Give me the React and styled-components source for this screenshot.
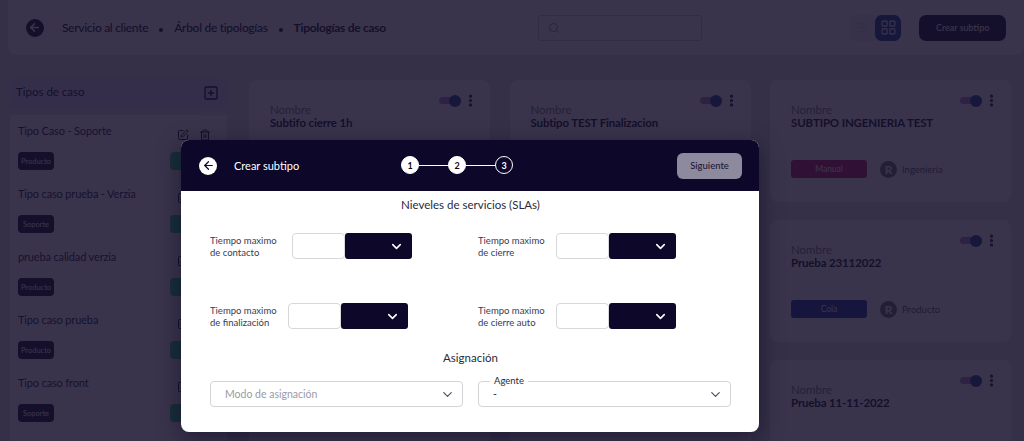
import React from "react";
import styled, { createGlobalStyle } from "styled-components";
import {
  ArrowLeft,
  ChevronDown,
  EllipsisVertical,
  LayoutGrid,
  Menu,
  Search,
  SquarePen,
  SquarePlus,
  Trash2,
} from "lucide-react";

const Global = createGlobalStyle`
  html, body { margin: 0; height: 441px; overflow: hidden; }
  body { font-family: "Lato", "Open Sans", sans-serif; background: #e0e0ec; color: #0d0729; }
  * { box-sizing: border-box; }
`;

const caseTypes = [
  { name: "Tipo Caso - Soporte", chip: "Producto" },
  { name: "Tipo caso prueba - Verzia", chip: "Soporte" },
  { name: "prueba calidad verzia", chip: "Producto" },
  { name: "Tipo caso prueba", chip: "Producto" },
  { name: "Tipo caso front", chip: "Soporte" },
];

const cards = [
  { name: "Subtifo cierre 1h" },
  { name: "Subtipo TEST Finalizacion" },
  { name: "SUBTIPO INGENIERIA TEST", mode: "Manual", color: "#c8106a", area: "Ingeniería" },
  {},
  {},
  { name: "Prueba 23112022", mode: "Cola", color: "#102ea0", area: "Producto" },
  {},
  {},
  { name: "Prueba 11-11-2022" },
];

const slaFields = [
  { id: "contact", width: 82, lines: ["Tiempo maximo", "de contacto"] },
  { id: "close", width: 78, lines: ["Tiempo maximo", "de cierre"] },
  { id: "finish", width: 78, lines: ["Tiempo maximo", "de finalización"] },
  { id: "auto", width: 78, lines: ["Tiempo maximo", "de cierre auto"] },
];

const App = () => {
  return (
    <Page>
      <Global />
      <TopBar>
        <BackDark>
          <ArrowLeft size={13} color="#fff" strokeWidth={3} />
        </BackDark>
        <Crumbs>
          <Crumb>Servicio al cliente</Crumb>
          <Dot />
          <Crumb>Árbol de tipologías</Crumb>
          <Dot />
          <Crumb $strong>Tipologías de caso</Crumb>
        </Crumbs>
        <SearchBox>
          <Search size={12} color="#8a8aa0" />
        </SearchBox>
        <ViewSwitch>
          <ViewButton>
            <Menu size={13} color="#d8d8e4" />
          </ViewButton>
          <ViewButton $active>
            <LayoutGrid size={17} color="#fff" strokeWidth={1.6} />
          </ViewButton>
        </ViewSwitch>
        <CreateButton>Crear subtipo</CreateButton>
      </TopBar>

      <Content>
        <Sidebar>
          <SideHead>
            Tipos de caso
            <AddIcon>
              <SquarePlus size={16} color="#0d0729" />
            </AddIcon>
          </SideHead>
          <SideList>
            {caseTypes.map((item) => (
              <SideItem key={item.name}>
                <ItemName>{item.name}</ItemName>
                <ItemIcons>
                  <SquarePen size={12} />
                  <Trash2 size={12} />
                </ItemIcons>
                <ItemChips>
                  <DarkChip>{item.chip}</DarkChip>
                  <GreenChip />
                </ItemChips>
              </SideItem>
            ))}
          </SideList>
        </Sidebar>

        <CardGrid>
          {cards.map((card, i) => (
            <Card key={i}>
              <CardTools>
                <Toggle>
                  <Knob />
                </Toggle>
                <EllipsisVertical size={15} strokeWidth={3} color="#0d0729" />
              </CardTools>
              {card.name && (
                <>
                  <CardLabel>Nombre</CardLabel>
                  <CardName>{card.name}</CardName>
                </>
              )}
              {card.mode && (
                <CardFoot>
                  <ModeChip $color={card.color}>{card.mode}</ModeChip>
                  <Avatar>R</Avatar>
                  <AreaName>{card.area}</AreaName>
                </CardFoot>
              )}
            </Card>
          ))}
        </CardGrid>
      </Content>

      <Overlay />

      <Modal>
        <ModalHead>
          <BackLight>
            <ArrowLeft size={13} color="#0d0729" strokeWidth={2.2} />
          </BackLight>
          <ModalTitle>Crear subtipo</ModalTitle>
          <Stepper>
            <Step $on>1</Step>
            <StepLine />
            <Step $on>2</Step>
            <StepLine />
            <Step>3</Step>
          </Stepper>
          <NextButton>Siguiente</NextButton>
        </ModalHead>
        <ModalBody>
          <SectionTitle>Nieveles de servicios (SLAs)</SectionTitle>
          <SlaGrid>
            {slaFields.map((field) => (
              <SlaField key={field.id}>
                <SlaLabel $width={field.width}>
                  {field.lines[0]}
                  <br />
                  {field.lines[1]}
                </SlaLabel>
                <TimeInput />
                <UnitSelect>
                  <ChevronDown size={15} color="#fff" strokeWidth={2.5} />
                </UnitSelect>
              </SlaField>
            ))}
          </SlaGrid>
          <AssignTitle>Asignación</AssignTitle>
          <AssignRow>
            <Select $muted>
              Modo de asignación
              <ChevronDown size={15} color="#55536a" />
            </Select>
            <Select>
              <FloatLabel>Agente</FloatLabel>-
              <ChevronDown size={15} color="#55536a" />
            </Select>
          </AssignRow>
        </ModalBody>
      </Modal>
    </Page>
  );
};

const Page = styled.div`
  position: relative;
  width: 1024px;
  height: 441px;
  overflow: hidden;
`;
const TopBar = styled.header`
  display: flex;
  align-items: center;
  height: 55px;
  margin-left: 8px;
  padding: 0 18px;
  background: #fff;
  border-radius: 0 0 8px 8px;
`;
const BackDark = styled.div`
  display: flex;
  align-items: center;
  justify-content: center;
  width: 18px;
  height: 18px;
  border-radius: 50%;
  background: #0d0729;
`;
const Crumbs = styled.nav`
  display: flex;
  align-items: center;
  gap: 11px;
  margin-left: 18px;
  width: 478px;
`;
const Crumb = styled.span`
  font-size: 12px;
  letter-spacing: -0.3px;
  font-weight: ${(p) => (p.$strong ? 700 : 500)};
  color: #0d0729;
`;
const Dot = styled.i`
  width: 4px;
  height: 4px;
  margin-top: 4px;
  border-radius: 50%;
  background: #0d0729;
`;
const SearchBox = styled.div`
  display: flex;
  align-items: center;
  width: 165px;
  height: 26px;
  padding-left: 9px;
  background: #fff;
  border: 1px solid #c8c8d4;
  border-radius: 3px;
`;
const ViewSwitch = styled.div`
  display: flex;
  margin-left: 147px;
  background: #eeeef2;
  border-radius: 7px;
`;
const ViewButton = styled.div`
  display: flex;
  align-items: center;
  justify-content: center;
  width: 26px;
  height: 26px;
  border-radius: 7px;
  background: ${(p) => (p.$active ? "#1c3f9c" : "transparent")};
`;
const CreateButton = styled.button`
  width: 87px;
  height: 26px;
  margin-left: 18px;
  padding: 0;
  border: 0;
  border-radius: 7px;
  background: #0d0729;
  color: #fff;
  font: 500 9px "Lato", sans-serif;
`;
const Content = styled.main`
  display: flex;
  gap: 22px;
  padding: 23px 13px 0 10px;
`;
const Sidebar = styled.aside`
  flex: 0 0 217px;
`;
const SideHead = styled.div`
  display: flex;
  align-items: center;
  justify-content: space-between;
  height: 30px;
  padding: 0 8px 4px 6px;
  font-size: 11.5px;
  background: #ddd8f6;
  border-radius: 6px 6px 0 0;
`;
const AddIcon = styled.span`
  display: flex;
  margin-top: 4px;
`;
const SideList = styled.div`
  margin-top: 7px;
  padding: 8px 0 0 8px;
  background: #fff;
  height: 340px;
`;
const SideItem = styled.div`
  position: relative;
  height: 63px;
`;
const ItemName = styled.div`
  font-size: 11px;
  letter-spacing: -0.15px;
  line-height: 16px;
  color: #16104a;
`;
const ItemIcons = styled.div`
  position: absolute;
  top: 6px;
  right: 16px;
  display: flex;
  gap: 10px;
  color: #0d0729;
`;
const ItemChips = styled.div`
  display: flex;
  justify-content: space-between;
  margin-top: 13px;
`;
const DarkChip = styled.span`
  display: flex;
  align-items: center;
  justify-content: center;
  width: 36px;
  height: 18px;
  border-radius: 4px;
  background: #0d0729;
  color: #fff;
  font-size: 7.5px;
`;
const GreenChip = styled.span`
  width: 57px;
  height: 18px;
  border-radius: 4px;
  background: #28d880;
`;
const CardGrid = styled.section`
  flex: 1;
  display: grid;
  grid-template-columns: repeat(3, 241px);
  grid-auto-rows: 122px;
  column-gap: 19.5px;
  row-gap: 18px;
  padding-top: 2px;
`;
const Card = styled.article`
  position: relative;
  padding: 23px 21px 0;
  background: #fff;
  border-radius: 8px;
`;
const CardTools = styled.div`
  position: absolute;
  top: 13px;
  right: 12px;
  display: flex;
  align-items: center;
  gap: 2px;
`;
const Toggle = styled.div`
  position: relative;
  width: 22px;
  height: 7px;
  border-radius: 4px;
  background: #b77dc9;
`;
const Knob = styled.div`
  position: absolute;
  right: 0;
  top: -2.5px;
  width: 12px;
  height: 12px;
  border-radius: 50%;
  background: #1c3f9c;
`;
const CardLabel = styled.div`
  font-size: 11.5px;
  line-height: 13px;
  color: #77758a;
`;
const CardName = styled.div`
  font-size: 11.5px;
  letter-spacing: -0.15px;
  line-height: 13px;
  font-weight: 700;
  color: #0d0729;
`;
const CardFoot = styled.div`
  display: flex;
  align-items: center;
  margin-top: 31px;
`;
const ModeChip = styled.span`
  display: flex;
  align-items: center;
  justify-content: center;
  width: 76px;
  height: 18px;
  border-radius: 3px;
  background: ${(p) => p.$color};
  color: #fff;
  font-size: 8.5px;
`;
const Avatar = styled.span`
  display: flex;
  align-items: center;
  justify-content: center;
  width: 17px;
  height: 17px;
  margin: 0 5px 0 13px;
  border-radius: 50%;
  background: #6f6f80;
  color: #fff;
  font-size: 12px;
  font-weight: 700;
`;
const AreaName = styled.span`
  font-size: 9.5px;
  color: #55536a;
`;
const Overlay = styled.div`
  position: absolute;
  inset: 0;
  background: rgba(22, 17, 44, 0.85);
`;
const Modal = styled.div`
  position: absolute;
  left: 181px;
  top: 140px;
  width: 578px;
  height: 292px;
  border-radius: 8px;
  overflow: hidden;
  background: #fff;
  box-shadow: 0 6px 22px rgba(10, 6, 30, 0.5);
`;
const ModalHead = styled.div`
  position: relative;
  display: flex;
  align-items: center;
  height: 51px;
  padding: 0 17px 0 18px;
  background: #0d0729;
`;
const BackLight = styled.div`
  display: flex;
  align-items: center;
  justify-content: center;
  width: 18px;
  height: 18px;
  border-radius: 50%;
  background: #fff;
`;
const ModalTitle = styled.div`
  margin-left: 17px;
  font-size: 11px;
  color: #fff;
`;
const Stepper = styled.div`
  position: absolute;
  left: 220px;
  top: 16px;
  display: flex;
  align-items: center;
`;
const Step = styled.div`
  display: flex;
  align-items: center;
  justify-content: center;
  width: 18px;
  height: 18px;
  border-radius: 50%;
  border: 1px solid #fff;
  background: ${(p) => (p.$on ? "#fff" : "transparent")};
  color: ${(p) => (p.$on ? "#0d0729" : "#fff")};
  font-size: 9px;
  font-weight: 700;
`;
const StepLine = styled.div`
  width: 29px;
  height: 1px;
  background: #fff;
`;
const NextButton = styled.button`
  width: 65px;
  height: 26px;
  margin-left: auto;
  padding: 0;
  border: 0;
  border-radius: 6px;
  background: #8c8a9c;
  color: #1d183a;
  font: 500 9.5px "Lato", sans-serif;
`;
const ModalBody = styled.div`
  padding: 0 28px 0 29px;
`;
const SectionTitle = styled.h3`
  margin: 0;
  padding-top: 6px;
  font-size: 11.5px;
  line-height: 15px;
  font-weight: 400;
  text-align: center;
  color: #2b2940;
`;
const SlaGrid = styled.div`
  display: grid;
  grid-template-columns: 253px 253px;
  grid-auto-rows: 26px;
  column-gap: 15px;
  row-gap: 44px;
  margin-top: 21px;
`;
const SlaField = styled.div`
  display: flex;
  align-items: stretch;
`;
const SlaLabel = styled.div`
  flex: 0 0 ${(p) => p.$width}px;
  align-self: center;
  padding-top: 2px;
  font-size: 9.5px;
  line-height: 12px;
  color: #3c3a50;
`;
const TimeInput = styled.div`
  width: 53px;
  background: #fff;
  border: 1px solid #d8d8d8;
  border-radius: 4px;
`;
const UnitSelect = styled.div`
  display: flex;
  align-items: center;
  justify-content: flex-end;
  width: 67px;
  padding-right: 8px;
  background: #0d0729;
  border-radius: 3px;
`;
const AssignTitle = styled.h3`
  margin: 21px 0 0;
  font-size: 11.5px;
  line-height: 15px;
  font-weight: 400;
  text-align: center;
  color: #2b2940;
`;
const AssignRow = styled.div`
  display: grid;
  grid-template-columns: 253px 253px;
  column-gap: 15px;
  margin-top: 16px;
`;
const Select = styled.div`
  position: relative;
  display: flex;
  align-items: center;
  justify-content: space-between;
  height: 26px;
  padding: 0 7px 0 14px;
  border: 1px solid #d4d4d8;
  border-radius: 4px;
  font-size: 10.5px;
  color: ${(p) => (p.$muted ? "#9a9aa4" : "#2b2940")};
`;
const FloatLabel = styled.span`
  position: absolute;
  left: 11px;
  top: -7px;
  padding: 0 4px;
  background: #fff;
  font-size: 9.5px;
  line-height: 11px;
  color: #2b2940;
`;

export default App;
